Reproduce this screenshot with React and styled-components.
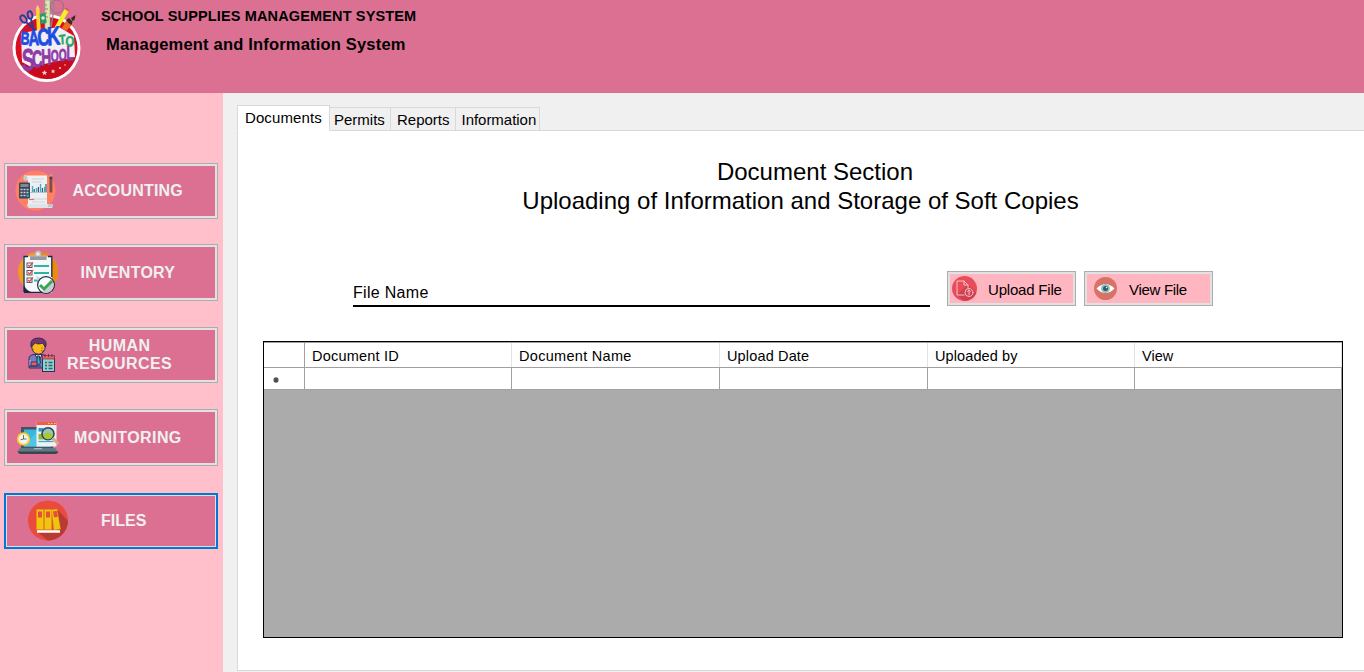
import React from 'react';
import styled, { createGlobalStyle } from 'styled-components';

const GlobalStyle = createGlobalStyle`
  * { box-sizing: border-box; }
  html, body { margin: 0; padding: 0; overflow: hidden; }
  body { font-family: "Liberation Sans", Arial, sans-serif; color: #000; background: #f0f0f0; }
  button { font-family: inherit; margin: 0; }
  svg { display: block; flex: none; }
`;

const Window = styled.div`
  width: 1364px;
  height: 672px;
  display: flex;
  flex-direction: column;
  overflow: hidden;
`;

const Header = styled.header`
  height: 93px;
  flex: none;
  display: flex;
  background: #db7093;
`;

const Titles = styled.div`
  display: flex;
  flex-direction: column;
  padding: 6px 0 0 2px;
  font-weight: 700;
  white-space: nowrap;
`;

const SystemName = styled.div`
  font-size: 14.5px;
  line-height: 20px;
  letter-spacing: ${(p) => p.$spacing}px;
`;

const SystemSubtitle = styled.div`
  font-size: 16.5px;
  line-height: 20px;
  margin: 8px 0 0 5px;
  letter-spacing: ${(p) => p.$spacing}px;
`;

const Body = styled.div`
  flex: 1;
  display: flex;
  min-height: 0;
`;

const Sidebar = styled.nav`
  width: 223px;
  flex: none;
  padding: 70px 5px 0 4px;
  background: #ffc0cb;
`;

const NavButton = styled.button`
  width: 214px;
  height: ${(p) => p.$height}px;
  margin-bottom: ${(p) => p.$gap}px;
  display: flex;
  align-items: center;
  padding: 0;
  color: #f0f0f0;
  background: #db7093;
  border: ${(p) => (p.$focused ? '2px solid #0078d7' : '1px solid #adadad')};
  box-shadow: inset 0 0 0 ${(p) => (p.$focused ? 1 : 2)}px #e1e1e1;
`;

const NavIcon = styled.span`
  flex: none;
  margin-left: ${(p) => p.$left}px;
`;

const NavLabel = styled.span`
  margin-left: ${(p) => p.$left}px;
  text-align: center;
  white-space: pre;
  font-weight: 700;
  font-size: 16px;
  line-height: 18px;
  letter-spacing: ${(p) => p.$spacing}px;
`;

const Main = styled.main`
  flex: 1;
  display: flex;
  flex-direction: column;
  padding: 12px 0 1px 14px;
`;

const TabStrip = styled.div`
  display: flex;
  align-items: flex-end;
  height: 26px;
  z-index: 1;
  margin-bottom: -1px;
`;

const Tab = styled.button`
  width: ${(p) => p.$width}px;
  height: ${(p) => (p.$active ? 26 : 24)}px;
  padding: ${(p) => (p.$active ? '0 0 1px 7px' : '1px 0 0 ' + p.$inset + 'px')};
  text-align: left;
  white-space: nowrap;
  font-size: 15px;
  line-height: 20px;
  letter-spacing: ${(p) => p.$spacing}px;
  color: #000;
  background: ${(p) => (p.$active ? '#fff' : '#f0f0f0')};
  border: 1px solid #d9d9d9;
  border-left-width: ${(p) => (p.$active ? 1 : 0)}px;
  border-bottom-color: ${(p) => (p.$active ? '#fff' : '#d9d9d9')};
`;

const Panel = styled.section`
  flex: 1;
  display: flex;
  flex-direction: column;
  padding: 26px 21px 0 25px;
  background: #fff;
  border: 1px solid #d9d9d9;
  border-right: 0;
`;

const Heading = styled.h1`
  margin: 0;
  width: 1075px;
  text-align: center;
  font-weight: 400;
  font-size: 24px;
  line-height: 29px;
  white-space: nowrap;
`;

const HeadingLine = styled.span`
  display: block;
  padding-left: ${(p) => p.$indent || 0}px;
`;

const FileBar = styled.div`
  display: flex;
  align-items: flex-end;
  height: 36px;
  margin: 56px 0 0 90px;
`;

const FileField = styled.label`
  width: 577px;
  height: 26px;
  margin: 0 17px 0 0;
  font-size: 16px;
  line-height: 23px;
  letter-spacing: ${(p) => p.$spacing}px;
  border-bottom: 2px solid #000;
`;

const ActionButton = styled.button`
  width: 129px;
  height: 35px;
  margin: 0 8px 1px 0;
  padding: 0 0 0 ${(p) => p.$inset}px;
  display: flex;
  align-items: center;
  gap: ${(p) => p.$gap}px;
  font-size: 15px;
  line-height: 20px;
  letter-spacing: ${(p) => p.$spacing}px;
  white-space: nowrap;
  color: #000;
  background: #ffb6c1;
  border: 1px solid #adadad;
  box-shadow: inset 0 0 0 2px #e1e1e1;
`;

const ActionLabel = styled.span`
  padding-top: 2px;
`;

const Grid = styled.div`
  width: 1080px;
  height: 297px;
  margin-top: 34px;
  background: #ababab;
  border: 1px solid #000;
`;

const GridRow = styled.div`
  display: grid;
  grid-template-columns: 41px 207px 208px 208px 207px 207px;
  height: ${(p) => p.$height}px;
  background: #fff;
  border-bottom: 1px solid #a0a0a0;
  border-top: ${(p) => (p.$top ? '1px solid #a0a0a0' : '0')};
`;

const HeadCell = styled.div`
  padding-left: 7px;
  font-size: 14.5px;
  line-height: 26px;
  height: 24px;
  white-space: nowrap;
  letter-spacing: ${(p) => p.$spacing}px;
  border-right: 1px solid ${(p) => (p.$corner ? '#a0a0a0' : '#e3e3e3')};
`;

const Cell = styled.div`
  border-right: 1px solid #a0a0a0;
`;

const RowMarker = styled(Cell)`
  display: flex;
  align-items: center;
  padding: 3px 0 0 9px;
`;

const Logo = () => (
  <svg width="99" height="93" viewBox="0 0 99 93">
    <circle cx="46.500" cy="48" r="34" fill="#fff" />
    <circle cx="46.500" cy="48" r="31" fill="#d90f20" />
    <path d="M20 60 Q30 77 47 79 Q66 78 75 59 Z" fill="#c70a1c" />
    <rect x="45" y="0" width="5" height="34" fill="#dce5ae" stroke="#9aa58a" strokeWidth=".7" />
    <path d="M45 5h2M45 9h3M45 13h2M45 17h3M45 21h2" stroke="#5c6a55" strokeWidth=".7" />
    <circle cx="57" cy="6.500" r="6.500" fill="none" stroke="#8b7384" strokeWidth="1" />
    <path d="M53 0l1 9-3 18" stroke="#8c8793" strokeWidth="1.300" fill="none" />
    <g fill="none" stroke="#263b9b" strokeWidth="1.800">
      <ellipse cx="23.500" cy="19" rx="2.600" ry="4" transform="rotate(-35 23.500 19)" />
      <ellipse cx="30" cy="15" rx="2.300" ry="3.800" transform="rotate(-12 30 15)" />
      <path d="M26 22l10 9M31 19l3 13" />
    </g>
    <path d="M36 9l1.500-4 2 4 1.500 26h-4z" fill="#ffd42b" />
    <path d="M36 9l1.500-4 2 4z" fill="#f2cfa1" />
    <path d="M39.500 14l6-1 1 10-6 1z" fill="#2a9a67" />
    <circle cx="43" cy="18" r="1.800" fill="#d8ebde" />
    <path d="M64.500 9l4 2.500-10 17-4-1z" fill="#f5ef27" />
    <path d="M64.500 9l1-2 4 2.500-1 2z" fill="#ef5664" />
    <path d="M62 28l4-7 4-1 2 5-6 6z" fill="#ea6b24" />
    <path d="M66 20l3-2 3.500 3.500-1 3.500q-3-1-5.500-5z" fill="#3d2825" />
    <path d="M71 18l4.500-3-1 5-2 1z" fill="#3d2825" />
    <path d="M21 33l38-6 15 9 1 21-44 10-9-5z" fill="#f3eef5" />
    <g fontFamily="Liberation Sans, Arial, sans-serif" fontWeight="700" strokeLinejoin="round" paintOrder="stroke">
      <text transform="scale(.7 1)" fill="#1d4de0" stroke="#1d4de0" strokeWidth=".8">
        <tspan x="29" y="44" fontSize="18" rotate="4">B</tspan>
        <tspan x="41" y="46" fontSize="21" rotate="-4">A</tspan>
        <tspan x="54" y="46" fontSize="24" rotate="-4">C</tspan>
        <tspan x="68" y="45.500" fontSize="26" rotate="-4">K</tspan>
      </text>
      <text transform="scale(.8 1)" fill="#28a85f" stroke="#28a85f" strokeWidth=".5">
        <tspan x="74.500" y="44.500" fontSize="13.500" rotate="-6">T</tspan>
        <tspan x="81.500" y="46" fontSize="14.500" rotate="3">O</tspan>
      </text>
      <text transform="scale(.6 1)" fill="#8d3aa5" stroke="#8d3aa5" strokeWidth=".8">
        <tspan x="37" y="71" fontSize="31" rotate="-3" >S</tspan>
        <tspan x="54" y="68" fontSize="24" rotate="-5">C</tspan>
        <tspan x="69" y="65.500" fontSize="23" rotate="-3">H</tspan>
        <tspan x="84.500" y="62.500" fontSize="17">O</tspan>
        <tspan x="98" y="61.500" fontSize="17">O</tspan>
        <tspan x="111" y="60.500" fontSize="20">L</tspan>
      </text>
    </g>
    <g fill="#f6c9cd">
      <path d="M44.500 70l.8 1.800 2 .1-1.500 1.300.5 2-1.800-1.100-1.700 1.100.4-2-1.500-1.300 2-.1z" />
      <path d="M53 69l.7 1.500 1.600.1-1.200 1.100.4 1.600-1.500-.9-1.400.9.4-1.600-1.200-1.100 1.600-.1z" />
      <circle cx="60" cy="68" r="1.100" />
      <circle cx="65" cy="65" r=".8" />
    </g>
  </svg>
);

const AccountingIcon = () => (
  <svg width="42" height="42" viewBox="0 0 42 42">
    <circle cx="20.500" cy="20.500" r="20" fill="#ff8062" />
    <path d="M9 5.500h23v30H13V10H9z" fill="#edf0f3" />
    <path d="M9 5.500q3 0 3.500 2v3H9q-1.500-2.500 0-5z" fill="#c5cbd1" />
    <path d="M12 34h25.500q1 3-1 4H14q-2-1-2-4z" fill="#dfe3e7" />
    <path d="M33 34h4.500v3H33z" fill="#bfc6cd" />
    <path d="M17 9h12M17 12h10M17 29h15M17 32h13" stroke="#ccd2d8" strokeWidth="1" />
    <path d="M17.500 22v-6M21.500 22v-4M25.500 22v-8M29.500 22v-5" stroke="#39afc9" strokeWidth="1.300" />
    <path d="M19.200 22v-3M23.400 22v-5M27.400 22v-4M31 22v-8" stroke="#44546c" strokeWidth="1.200" />
    <path d="M15 22.500h18" stroke="#98a4ae" strokeWidth=".6" />
    <path d="M14 29.500h5" stroke="#e97057" strokeWidth="1.200" />
    <rect x="4" y="12.500" width="11" height="16" rx="1" fill="#39465a" />
    <rect x="5.500" y="14" width="8" height="3" fill="#7b8999" />
    <path d="M5.500 19.500h8M5.500 22.500h8M5.500 25.500h5" stroke="#cbd2da" strokeWidth="1.700" strokeDasharray="2 1" />
    <rect x="11.500" y="24.500" width="2.300" height="2.500" fill="#20b6c9" />
    <path d="M34.500 6.500l1.500-3 1.500 3z" fill="#d6aa75" />
    <rect x="34.500" y="6.500" width="2.800" height="16" fill="#7c4e49" />
    <path d="M34.500 7.500h2.800v1.300h-2.800z" fill="#343746" />
  </svg>
);

const InventoryIcon = () => (
  <svg width="42" height="48" viewBox="0 0 42 48">
    <circle cx="21" cy="23" r="20" fill="#f39b1b" />
    <path d="M21 3a20 20 0 0 1 0 40z" fill="#e98b10" />
    <path d="M6.500 7.500H35v36H13l-6.500-7z" fill="#f7f8fa" />
    <path d="M7 43V7.500h4M31 7.500h3.800V28M7 43.300h19" stroke="#132b49" strokeWidth="1.300" fill="none" />
    <path d="M7 34.500q0 6 7 8.500H7z" fill="#132b49" />
    <path d="M13 10V6.500h5V3q3.500-3.500 6 0v3.500h5.500V10z" fill="#b8babd" />
    <path d="M19.500 6.500V3.500h3v3z" fill="#eff0f1" />
    <rect x="13" y="7.500" width="16.500" height="3.500" fill="#969b9f" />
    <g fill="#fff" stroke="#404e5e" strokeWidth=".9">
      <rect x="10" y="14" width="5" height="4.500" />
      <rect x="10" y="21.500" width="5" height="4.500" />
      <rect x="10" y="29" width="5" height="4.500" />
    </g>
    <path d="M11 16l1.500 1.500 3.500-4M11 23.500l1.500 1.500 3.500-4M11 31l1.500 1.500 3.500-4" fill="none" stroke="#e24b48" strokeWidth="1.200" />
    <path d="M17 17h15M17 24h15M17 31.500h7" stroke="#2cb5a0" strokeWidth="1.800" />
    <path d="M19 27l7 3-2 10z" fill="#cfd4d8" />
    <circle cx="29" cy="36" r="8.400" fill="#fff" stroke="#142d49" strokeWidth="1.200" />
    <path d="M34.500 30.500A8 8 0 0 1 25 43z" fill="#c9ccce" />
    <path d="M23 36l4 4 8-8" fill="none" stroke="#36a853" strokeWidth="3" />
  </svg>
);

const HumanResourcesIcon = () => (
  <svg width="28" height="36" viewBox="0 0 28 36">
    <g stroke="#2d2c63" strokeWidth="1">
      <path d="M1 30V22q0-4 5-4.500h7q6 .5 6.500 5V31H1z" fill="#777dbf" />
      <path d="M7 17.500h7l-3 7z" fill="#f1dfd0" />
      <path d="M9.300 19h2l1.200 7-1.800 2-2-2z" fill="#35b2ae" />
      <ellipse cx="10.500" cy="10" rx="6.700" ry="7.200" fill="#fbb91a" />
      <path d="M3 10Q1.500 1 10.500 1q8.500.3 7.500 8l-1 1-2-4Q9 8 7 5.500 6 8 3 10z" fill="#7b3264" />
    </g>
    <path d="M2 23v6" stroke="#b4c3eb" strokeWidth="1" />
    <path d="M13 13.500q1 1.500 3 0M13.500 11h1M5 12v1" fill="none" stroke="#6b473b" strokeWidth="1" />
    <path d="M3 25h6v4H3z" fill="#f05b5b" stroke="#2d2c63" strokeWidth=".8" />
    <path d="M1 29h12" stroke="#2d2c63" strokeWidth="1" />
    <rect x="14.500" y="20" width="12" height="14.500" fill="#90d3ca" stroke="#2d2c63" />
    <path d="M14.500 18.500h12V22h-12z" fill="#f15f5c" stroke="#793056" strokeWidth=".7" />
    <path d="M17 17v3M20.500 17v3M24 17v3" stroke="#3b2c5a" strokeWidth=".8" />
    <path d="M17 25.500h2M20.500 25.500h4M17 28.500h2M20.500 28.500h4M17 31.500h2M20.500 31.500h4" stroke="#345e76" strokeWidth="1.300" />
  </svg>
);

const MonitoringIcon = () => (
  <svg width="44" height="34" viewBox="0 0 44 34">
    <path d="M5 6h32v22H5z" fill="#46535f" />
    <path d="M8 8.500h27v17H8z" fill="#34b8de" />
    <path d="M8 25.500L23 8.500h12v17z" fill="#51c4e5" />
    <path d="M4 27h35l3 4H1z" fill="#627884" />
    <path d="M2 30.500h40v1.300l-2 1.200H4l-2-1.200z" fill="#394650" />
    <path d="M18 27h8v1.300h-8z" fill="#a8b6bd" />
    <path d="M20.500 1h20v24.500h-20z" fill="#edf1f3" />
    <path d="M20.500 1h20v3h-20z" fill="#ef5d43" />
    <path d="M32 2.500h1.500M35 2.500h1.500M38 2.500h1.500" stroke="#f9d65a" strokeWidth="1" />
    <path d="M22.500 7h5v3.500h-5z" fill="#2799ca" />
    <path d="M22.500 13h13v5.500h-13z" fill="#8cb73a" />
    <path d="M22.500 20.500h15" stroke="#40a9d2" strokeWidth="1.300" />
    <circle cx="32" cy="12.800" r="6" fill="#9ac5bf" stroke="#34424b" strokeWidth="1.600" />
    <path d="M27 13.500q5-4 10 0-1 4.500-5 4.800-4-.3-5-4.800z" fill="#a6c83e" />
    <path d="M36.500 17l6 6" stroke="#d8ab85" strokeWidth="3" />
    <circle cx="7.500" cy="18" r="6.700" fill="#f6c92f" />
    <circle cx="7.500" cy="18" r="4.900" fill="#f3f5ed" />
    <path d="M7.500 14v4h3M7.500 18l-3 .8" stroke="#536169" strokeWidth=".9" fill="none" />
  </svg>
);

const FilesIcon = () => (
  <svg width="42" height="42" viewBox="0 0 42 42">
    <circle cx="20" cy="20.500" r="20" fill="#ea4b3c" />
    <path d="M29 9l11 12A20 20 0 0 1 20 40.500L9 32l21-1z" fill="#b83b32" />
    <g fill="#f1c40f" stroke="#d99b10" strokeWidth=".5">
      <path d="M8.500 9.500h7v20h-7zM16.500 9.500h7v20h-7z" />
      <path d="M23.500 10l5.500-1 3.500 20-6.500 1z" />
    </g>
    <path d="M10 11.500h4v6h-4zM18 11.500h4v6h-4z" fill="#e64f35" />
    <path d="M25 11.500l3.800-.7 1.100 6-3.800.7z" fill="#e64f35" />
    <path d="M9 31.500h23" stroke="#fff" strokeWidth="2.500" />
  </svg>
);

const UploadIcon = () => (
  <svg width="25" height="25" viewBox="0 0 25 25">
    <circle cx="12.500" cy="12.500" r="12.500" fill="#e84c5b" />
    <path d="M16 8l8.500 9Q21 25 12 25L5 19z" fill="#cf4051" />
    <g fill="none" stroke="#f6bfc5" strokeWidth="1" strokeLinecap="round" strokeLinejoin="round">
      <path d="M12 19H5V5h7l4 4v3M12 5v4h4" />
      <circle cx="17" cy="16.500" r="4" />
      <path d="M17 19v-5M15.500 15.500L17 14l1.500 1.500" />
    </g>
  </svg>
);

const EyeIcon = () => (
  <svg width="23" height="23" viewBox="0 0 23 23">
    <circle cx="11.500" cy="11.500" r="11.500" fill="#d77366" />
    <path d="M2.500 11.500Q11.500 2.500 20.500 11.500Q11.500 20.500 2.500 11.500z" fill="#fff" />
    <circle cx="11.500" cy="11.500" r="4.500" fill="#8bc5c9" />
    <circle cx="11.500" cy="11.500" r="2.500" fill="#41545c" />
    <circle cx="12.500" cy="10.500" r=".8" fill="#d5ebed" />
  </svg>
);

const navItems = [
  { label: 'ACCOUNTING', Icon: AccountingIcon, height: 56, gap: 25, icon: 10, text: 15.5, spacing: 0.2 },
  { label: 'INVENTORY', Icon: InventoryIcon, height: 57, gap: 26, icon: 12, text: 21.5, spacing: 0.25 },
  { label: 'HUMAN\nRESOURCES', Icon: HumanResourcesIcon, height: 56, gap: 26, icon: 23, text: 11, spacing: 0.42 },
  { label: 'MONITORING', Icon: MonitoringIcon, height: 57, gap: 27, icon: 11, text: 14, spacing: 0.4 },
  { label: 'FILES', Icon: FilesIcon, height: 56, gap: 0, icon: 22, text: 31, spacing: 0, focused: true },
];

const tabs = [
  { label: 'Documents', width: 93, inset: 7, spacing: 0.1, active: true },
  { label: 'Permits', width: 61, inset: 4, spacing: 0 },
  { label: 'Reports', width: 65, inset: 6, spacing: 0 },
  { label: 'Information', width: 84, inset: 5.5, spacing: -0.03 },
];

const columns = [
  { label: 'Document ID', spacing: 0.2 },
  { label: 'Document Name', spacing: 0.3 },
  { label: 'Upload Date', spacing: 0.15 },
  { label: 'Uploaded by', spacing: 0.1 },
  { label: 'View', spacing: 0 },
];

export default function App() {
  return (
    <Window>
      <GlobalStyle />
      <Header>
        <Logo />
        <Titles>
          <SystemName $spacing={0.14}>SCHOOL SUPPLIES MANAGEMENT SYSTEM</SystemName>
          <SystemSubtitle $spacing={0.19}>Management and Information System</SystemSubtitle>
        </Titles>
      </Header>
      <Body>
        <Sidebar>
          {navItems.map(({ label, Icon, ...item }) => (
            <NavButton key={label} $height={item.height} $gap={item.gap} $focused={item.focused}>
              <NavIcon $left={item.icon}><Icon /></NavIcon>
              <NavLabel $left={item.text} $spacing={item.spacing}>{label}</NavLabel>
            </NavButton>
          ))}
        </Sidebar>
        <Main>
          <TabStrip>
            {tabs.map((tab) => (
              <Tab key={tab.label} $width={tab.width} $inset={tab.inset} $spacing={tab.spacing} $active={tab.active}>
                {tab.label}
              </Tab>
            ))}
          </TabStrip>
          <Panel>
            <Heading>
              <HeadingLine $indent={29}>Document Section</HeadingLine>
              <HeadingLine>Uploading of Information and Storage of Soft Copies</HeadingLine>
            </Heading>
            <FileBar>
              <FileField $spacing={0.3}>File Name</FileField>
              <ActionButton $inset={4} $gap={11} $spacing={-0.2}>
                <UploadIcon />
                <ActionLabel>Upload File</ActionLabel>
              </ActionButton>
              <ActionButton $inset={9} $gap={12} $spacing={-0.3}>
                <EyeIcon />
                <ActionLabel>View File</ActionLabel>
              </ActionButton>
            </FileBar>
            <Grid>
              <GridRow $height={26} $top>
                <HeadCell $corner />
                {columns.map((c) => (
                  <HeadCell key={c.label} $spacing={c.spacing}>{c.label}</HeadCell>
                ))}
              </GridRow>
              <GridRow $height={22}>
                <RowMarker>
                  <svg width="6" height="6" viewBox="0 0 6 6">
                    <path d="M3 0v6M0 3h6M1 1l4 4M5 1L1 5" stroke="#484848" strokeWidth="1.200" />
                  </svg>
                </RowMarker>
                {columns.map((c) => <Cell key={c.label} />)}
              </GridRow>
            </Grid>
          </Panel>
        </Main>
      </Body>
    </Window>
  );
}
